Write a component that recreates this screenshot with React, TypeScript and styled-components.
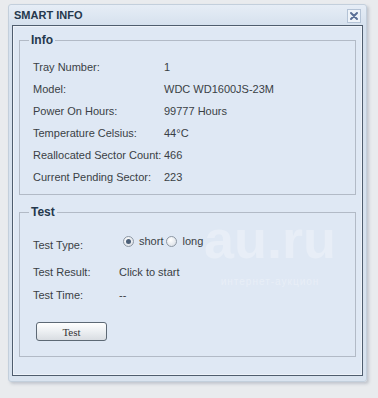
import styled, { createGlobalStyle } from "styled-components";
import { Fragment } from "react";

const GlobalStyle = createGlobalStyle`
  html, body {
    margin: 0;
    padding: 0;
    background: #e9ebee;
    font-family: "Liberation Sans", Arial, sans-serif;
  }
`;

const Page = styled.div`
  position: relative;
  width: 378px;
  height: 398px;
  padding: 4px 0 0 8px;
  box-sizing: border-box;
  overflow: hidden;
`;

const Window = styled.div`
  width: 359px;
  height: 378px;
  box-sizing: border-box;
  border: 1px solid #c3cfdc;
  border-radius: 3px;
  background: linear-gradient(#e6edf6, #d6e1ee 20px, #d9e3ef);
  box-shadow: 2px 2px 3px rgba(120, 130, 145, 0.35);
  display: flex;
  flex-direction: column;
  padding: 0 3px 5px 3px;
`;

const Header = styled.div`
  height: 20px;
  display: flex;
  align-items: center;
  justify-content: space-between;
  padding: 0 2px 0 2px;
`;

const Title = styled.span`
  font-size: 11px;
  font-weight: bold;
  color: #25384d;
`;

const CloseButton = styled.div`
  width: 12px;
  height: 12px;
  border: 1px solid #b4c3d6;
  background: #eef3f9;
  display: flex;
  align-items: center;
  justify-content: center;
  margin-top: 1px;
`;

const Panel = styled.div`
  flex: 1;
  border: 1px solid #4f5d6e;
  box-shadow: inset 0 0 0 1px #eef3fa;
  background: #dfe8f4;
  padding: 6px 6px 0 6px;
`;

const Fieldset = styled.fieldset<{ $gap?: number; $pad: string }>`
  position: relative;
  margin: ${(p) => p.$gap ?? 0}px 0 0 0;
  border: 1px solid #b2bac6;
  padding: ${(p) => p.$pad};
  min-width: 0;
`;

const Legend = styled.legend`
  font-size: 12px;
  font-weight: bold;
  color: #25384d;
  line-height: 16px;
  padding: 0 2px;
  margin-left: -4px;
`;

const InfoGrid = styled.div`
  display: grid;
  grid-template-columns: 131px 1fr;
  grid-auto-rows: 22px;
  align-items: center;
  font-size: 11px;
  color: #3a3f45;
  white-space: nowrap;
`;

const Row = styled.div<{ $top?: number; $height?: number }>`
  display: flex;
  align-items: center;
  height: ${(p) => p.$height ?? 22}px;
  margin-top: ${(p) => p.$top ?? 0}px;
  font-size: 11px;
  color: #3a3f45;
  white-space: nowrap;
`;

const Label = styled.span`
  width: 86px;
  flex: none;
`;

const RadioGroup = styled.div`
  display: flex;
  align-items: center;
  align-self: flex-start;
  margin-top: 2px;
  margin-left: 4px;
`;

const Radio = styled.span<{ $checked?: boolean }>`
  width: 9px;
  height: 9px;
  border-radius: 50%;
  border: 1px solid #8d97a3;
  background: radial-gradient(circle at 40% 35%, #ffffff, #d4dae2);
  display: inline-flex;
  align-items: center;
  justify-content: center;
  margin-right: 5px;
  &::after {
    content: "";
    width: 5px;
    height: 5px;
    border-radius: 50%;
    background: ${(p) => (p.$checked ? "#4b5f78" : "transparent")};
  }
`;

const RadioText = styled.span`
  margin-right: 3px;
`;

const Button = styled.button`
  margin: 16px 0 0 3px;
  width: 71px;
  height: 19px;
  border: 1px solid #5d6975;
  border-radius: 3px;
  background: linear-gradient(#ffffff, #eceff2 50%, #d9dde2);
  font-family: "Liberation Serif", "Times New Roman", serif;
  font-size: 11px;
  color: #333;
  padding: 0;
  cursor: pointer;
`;

/* faint watermark of the screenshot source */
const Watermark = styled.div`
  position: absolute;
  left: 204px;
  top: 210px;
  display: flex;
  flex-direction: column;
  align-items: center;
  color: rgba(255, 255, 255, 0.28);
  pointer-events: none;
`;

const WatermarkBig = styled.span`
  font-family: "Liberation Sans", Arial, sans-serif;
  font-size: 54px;
  font-weight: bold;
  line-height: 58px;
`;

const WatermarkSmall = styled.span`
  font-family: "Liberation Sans", Arial, sans-serif;
  font-size: 10px;
  letter-spacing: 1px;
  margin-top: 8px;
`;

const info: [string, string][] = [
  ["Tray Number:", "1"],
  ["Model:", "WDC WD1600JS-23M"],
  ["Power On Hours:", "99777 Hours"],
  ["Temperature Celsius:", "44°C"],
  ["Reallocated Sector Count:", "466"],
  ["Current Pending Sector:", "223"],
];

export default function App() {
  return (
    <>
      <GlobalStyle />
      <Page>
        <Window>
          <Header>
            <Title>SMART INFO</Title>
            <CloseButton>
              <svg width="10" height="10" viewBox="0 0 10 10">
                <path d="M2 2 L8 8 M8 2 L2 8" stroke="#5a6f96" strokeWidth="2" strokeLinecap="round" />
              </svg>
            </CloseButton>
          </Header>
          <Panel>
            <Fieldset $pad="8px 13px 6px 13px">
              <Legend>Info</Legend>
              <InfoGrid>
                {info.map(([k, v]) => (
                  <Fragment key={k}>
                    <span>{k}</span>
                    <span>{v}</span>
                  </Fragment>
                ))}
              </InfoGrid>
            </Fieldset>
            <Fieldset $gap={9} $pad="13px 13px 15px 13px">
              <Legend>Test</Legend>
              <Row $height={24}>
                <Label>Test Type:</Label>
                <RadioGroup>
                  <Radio $checked />
                  <RadioText>short</RadioText>
                  <Radio />
                  <RadioText>long</RadioText>
                </RadioGroup>
              </Row>
              <Row $top={4}>
                <Label>Test Result:</Label>
                <span>Click to start</span>
              </Row>
              <Row $top={1}>
                <Label>Test Time:</Label>
                <span>--</span>
              </Row>
              <Button>Test</Button>
            </Fieldset>
          </Panel>
        </Window>
        <Watermark>
          <WatermarkBig>au.ru</WatermarkBig>
          <WatermarkSmall>интернет-аукцион</WatermarkSmall>
        </Watermark>
      </Page>
    </>
  );
}
